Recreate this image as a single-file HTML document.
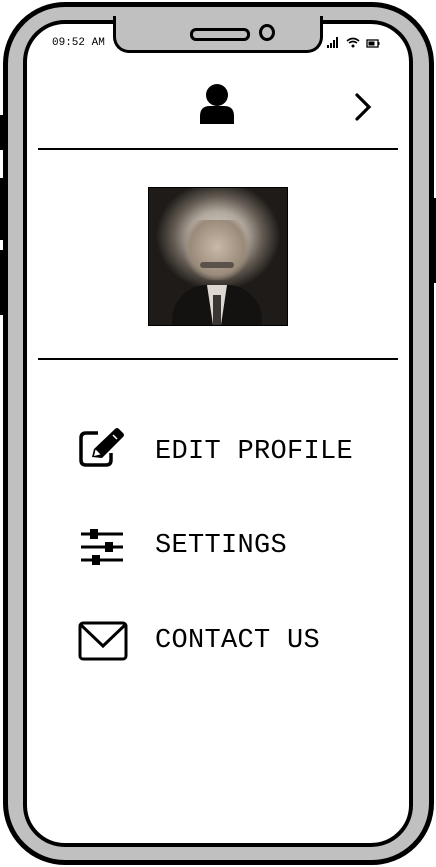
<!DOCTYPE html>
<html><head><style>
html,body{margin:0;padding:0;background:#fff;width:436px;height:867px;overflow:hidden;position:relative;font-family:"Liberation Mono",monospace}
.abs{position:absolute}
.outer{left:3px;top:2px;width:421px;height:853px;background:#c0c0c0;border:5px solid #000;border-radius:62px}
.screen{left:23px;top:20px;width:382px;height:819px;background:#fff;border:4px solid #000;border-radius:42px}
.notch{left:113px;top:16px;width:204px;height:34px;background:#c0c0c0;border:3px solid #000;border-top:none;border-radius:0 0 16px 16px}
.menu{left:155px;font-size:27px;color:#000;letter-spacing:0.3px}
.line{height:2px;background:#000;left:38px;width:360px}
.btn{background:#000;width:4px;left:0}
</style></head><body>
<div class="abs btn" style="top:115px;height:35px"></div>
<div class="abs btn" style="top:178px;height:62px"></div>
<div class="abs btn" style="top:250px;height:65px"></div>
<div class="abs btn" style="left:432px;top:198px;height:85px"></div>
<div class="abs outer"></div>
<div class="abs screen"></div>
<div class="abs notch"></div>
<div class="abs" style="left:190px;top:28px;width:54px;height:7px;border:3px solid #000;border-radius:6px;background:#c0c0c0"></div>
<div class="abs" style="left:259px;top:24px;width:10px;height:11px;border:3px solid #000;border-radius:50%;background:#c0c0c0"></div>
<div class="abs" style="left:52px;top:37px;font-size:11px">09:52 AM</div>
<svg class="abs" style="left:326px;top:36px" width="60" height="14">
<rect x="1" y="9" width="2" height="3"/><rect x="4" y="7" width="2" height="5"/><rect x="7" y="4" width="2" height="8"/><rect x="10" y="1" width="2" height="11"/>
<path d="M21 5 Q27 0 33 5 M23 7 Q27 4 31 7" stroke="#000" stroke-width="1.6" fill="none"/><circle cx="27" cy="10" r="1.5"/>
<rect x="41" y="4" width="11" height="7" fill="none" stroke="#000" stroke-width="1.3"/><rect x="42.5" y="5.5" width="6" height="4"/><rect x="52" y="6" width="1.5" height="3"/>
</svg>
<svg class="abs" style="left:198px;top:82px" width="38" height="44">
<circle cx="19" cy="13" r="11"/>
<path d="M2 42 L2 34 Q2 24 12 24 L26 24 Q36 24 36 34 L36 42 Z"/>
</svg>
<svg class="abs" style="left:354px;top:92px" width="20" height="30"><path d="M3 3 L15 15 L3 27" stroke="#000" stroke-width="3.2" fill="none" stroke-linecap="round"/></svg>
<div class="abs line" style="top:148px"></div>
<div class="abs" style="left:148px;top:187px;width:138px;height:137px;border:1px solid #000;background:radial-gradient(ellipse 45% 40% at 50% 35%,#e0d8cc 0%,#b0a79c 45%,#625a52 72%,#1e1b18 100%)"></div>
<div class="abs" style="left:185px;top:220px;width:64px;height:60px;background:radial-gradient(ellipse at 50% 45%,#c9b9a8 0%,#9a8a7a 60%,transparent 75%)"></div>
<div class="abs" style="left:200px;top:262px;width:34px;height:6px;background:#5a524a;border-radius:3px"></div>
<div class="abs" style="left:172px;top:285px;width:90px;height:40px;background:#141210;border-radius:35px 35px 0 0"></div>
<div class="abs" style="left:207px;top:285px;width:20px;height:40px;background:#ddd8d0;clip-path:polygon(0 0,100% 0,70% 100%,30% 100%)"></div>
<div class="abs" style="left:213px;top:295px;width:8px;height:30px;background:#3a3632"></div>
<div class="abs line" style="top:358px"></div>
<svg class="abs" style="left:78px;top:427px" width="52" height="40">
<path d="M20 6 L8 6 Q3 6 3 11 L3 33 Q3 38 8 38 L28 38 Q33 38 33 33 L33 26" fill="none" stroke="#000" stroke-width="3.5"/>
<path d="M14 30 L16 22 L37 2 Q39 0 41 2 L45 6 Q47 8 45 10 L24 31 Z" fill="#000"/>
<path d="M17 28 L18 24 L21 27 Z M35 8 L39 12" stroke="#fff" stroke-width="1.5" fill="#fff"/>
</svg>
<div class="abs menu" style="top:437px">EDIT PROFILE</div>
<svg class="abs" style="left:80px;top:529px" width="44" height="36">
<g stroke="#000" stroke-width="3"><line x1="1" y1="5" x2="43" y2="5"/><line x1="1" y1="18" x2="43" y2="18"/><line x1="1" y1="31" x2="43" y2="31"/></g>
<rect x="10" y="0" width="8" height="10"/><rect x="25" y="13" width="8" height="10"/><rect x="12" y="26" width="8" height="10"/>
</svg>
<div class="abs menu" style="top:531px">SETTINGS</div>
<svg class="abs" style="left:78px;top:621px" width="50" height="40">
<rect x="2" y="2" width="46" height="36" rx="3" fill="none" stroke="#000" stroke-width="3"/>
<path d="M3 4 L25 25 L47 4" fill="none" stroke="#000" stroke-width="3"/>
</svg>
<div class="abs menu" style="top:626px">CONTACT US</div>
</body></html>
